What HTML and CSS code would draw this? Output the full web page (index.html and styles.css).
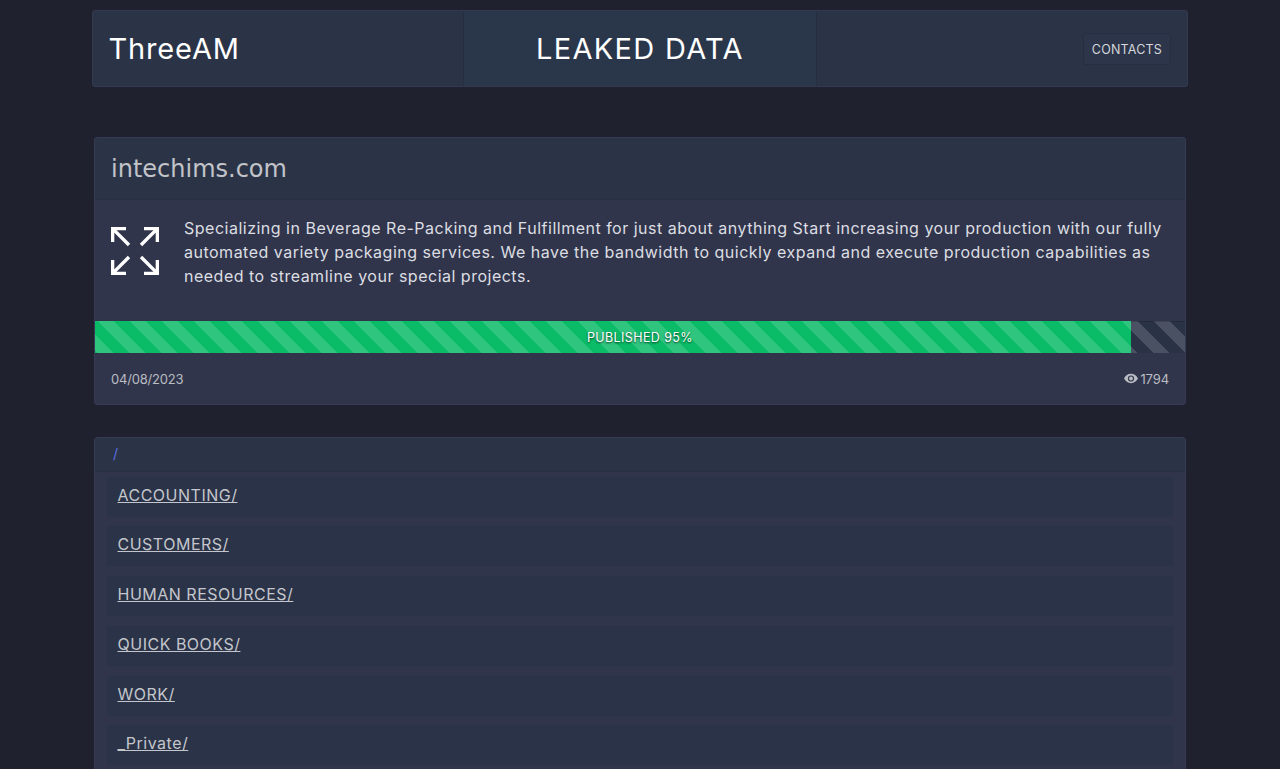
FILE: index.html
```html
<!DOCTYPE html>
<html lang="en">
<head>
<meta charset="utf-8">
<title>ThreeAM</title>
<link rel="stylesheet" href="styles.css">
</head>
<body>
<div class="page">
  <header class="topbar">
    <div class="brand">ThreeAM</div>
    <div class="title">LEAKED DATA</div>
    <div class="actions"><a class="btn" href="#">CONTACTS</a></div>
  </header>
  <main class="content">
    <section class="card">
      <div class="card-head">intechims.com</div>
      <div class="card-body">
        <svg class="expand" viewBox="0 0 48 48" aria-hidden="true">
          <path d="M1.6 15V1.6H15M1.6 1.6L18 18"/>
          <path d="M46.4 15V1.6H33M46.4 1.6L30 18"/>
          <path d="M1.6 33V46.4H15M1.6 46.4L18 30"/>
          <path d="M46.4 33V46.4H33M46.4 46.4L30 30"/>
        </svg>
        <p class="desc">Specializing in Beverage Re-Packing and Fulfillment for just about anything Start increasing your production with our fully automated variety packaging services. We have the bandwidth to quickly expand and execute production capabilities as needed to streamline your special projects.</p>
      </div>
      <div class="progress">
        <div class="bar" style="width:95%"></div>
        <span class="bar-label">PUBLISHED 95%</span>
      </div>
      <div class="card-foot">
        <span class="date">04/08/2023</span>
        <span class="views"><svg class="eye" viewBox="0 0 576 512" aria-hidden="true"><path d="M288 64C160 64 58 146 0 256c58 110 160 192 288 192s230-82 288-192C518 146 416 64 288 64zm0 320a128 128 0 1 1 0-256 128 128 0 0 1 0 256zm0-208a80 80 0 1 0 0 160 80 80 0 0 0 0-160z"/></svg>1794</span>
      </div>
    </section>
    <section class="card files">
      <div class="crumb"><a href="#">/</a></div>
      <ul class="list">
        <li><a href="#">ACCOUNTING/</a></li>
        <li><a href="#">CUSTOMERS/</a></li>
        <li><a href="#">HUMAN RESOURCES/</a></li>
        <li><a href="#">QUICK BOOKS/</a></li>
        <li><a href="#">WORK/</a></li>
        <li><a href="#">_Private/</a></li>
      </ul>
    </section>
  </main>
</div>
</body>
</html>
```

FILE: styles.css
```css
* { box-sizing: border-box; }
html, body { margin: 0; padding: 0; }
body {
  background: #1f212e;
  color: #c8cad0;
  font-family: Inter, "Liberation Sans", sans-serif;
  font-size: 16px;
  line-height: 24px;
}
a { color: inherit; }
.page { width: 1096px; margin: 0 auto; padding-top: 10px; }
.topbar {
  display: grid;
  grid-template-columns: 370px 354px 1fr;
  height: 77px;
  background: #2b3447;
  border: 1px solid #333950;
  border-radius: 3px;
}
.brand, .title, .actions { display: flex; align-items: center; }
.brand { padding-left: 15.5px; font-size: 29px; color: #fff; letter-spacing: .85px; }
.title {
  justify-content: center;
  font-size: 29px;
  letter-spacing: 1.3px;
  color: #fff;
  background: #2a374b;
  border-left: 1px solid #262f40;
  border-right: 1px solid #262f40;
}
.actions { justify-content: flex-end; padding-right: 16px; }
.btn {
  font-size: 12.5px;
  letter-spacing: .2px;
  line-height: 32px;
  height: 32px;
  padding: 0 8px;
  color: #d5d7dc;
  text-decoration: none;
  background: #2c3549;
  border: 1px solid #262e42;
  border-radius: 3px;
}
.content { padding: 50px 2px 0; }
.card {
  background: #31354b;
  border: 1px solid #363a52;
  border-radius: 3px;
  overflow: hidden;
}
.card-head {
  height: 62px;
  padding: 1px 0 0 16px;
  display: flex;
  align-items: center;
  font-family: "DejaVu Sans", sans-serif;
  font-size: 24px;
  color: #c2c4c9;
  background: #2b3447;
  border-bottom: 1px solid #2a3042;
}
.card-body {
  display: flex;
  gap: 25px;
  height: 121px;
  padding: 16px 16px 0;
}
.expand {
  flex: none;
  width: 48px;
  height: 48px;
  margin-top: 11px;
  fill: none;
  stroke: #fff;
  stroke-width: 3.4;
}
.desc { margin: 0; letter-spacing: .5px; color: #dcdee2; }
.progress {
  position: relative;
  height: 32px;
  background-color: #2a3346;
  background-image: linear-gradient(45deg, rgba(255,255,255,.15) 25%, transparent 25%, transparent 50%, rgba(255,255,255,.15) 50%, rgba(255,255,255,.15) 75%, transparent 75%, transparent);
  background-size: 32px 32px;
  background-position: 2px 0;
  box-shadow: inset 0 1px 0 rgba(0,0,0,.15);
}
.bar {
  height: 32px;
  background-color: #0abb67;
  background-image: linear-gradient(45deg, rgba(255,255,255,.15) 25%, transparent 25%, transparent 50%, rgba(255,255,255,.15) 50%, rgba(255,255,255,.15) 75%, transparent 75%, transparent);
  background-size: 32px 32px;
  background-position: 2px 0;
}
.bar-label {
  position: absolute;
  inset: 0;
  text-align: center;
  font-size: 12.5px;
  letter-spacing: .4px;
  line-height: 33px;
  color: #fff;
  text-shadow: 0 1px 2px rgba(0,0,0,.7);
}
.card-foot {
  display: flex;
  justify-content: space-between;
  align-items: center;
  height: 51px;
  padding: 0 16px;
  font-size: 13px;
  color: #b9bcc3;
}
.date { letter-spacing: -.2px; }
.views { display: flex; align-items: center; gap: 2px; letter-spacing: -.1px; }
.eye { width: 14px; height: 13px; fill: #b9bcc3; }
.files { margin-top: 32px; }
.crumb {
  height: 34px;
  padding-left: 18px;
  font-size: 14px;
  line-height: 32px;
  background: #2b3447;
  border-bottom: 1px solid #2a3042;
}
.crumb a { text-decoration: none; color: #5b6ee0; }
.list { list-style: none; margin: 0; padding: 4.8px 12px 6px; }
.list li {
  height: 40px;
  margin-bottom: 9.7px;
  padding-left: 10.5px;
  line-height: 36px;
  background: #2a3347;
  border-radius: 3px;
  font-size: 16px;
  letter-spacing: .5px;
  color: #c4c6cc;
}
```
